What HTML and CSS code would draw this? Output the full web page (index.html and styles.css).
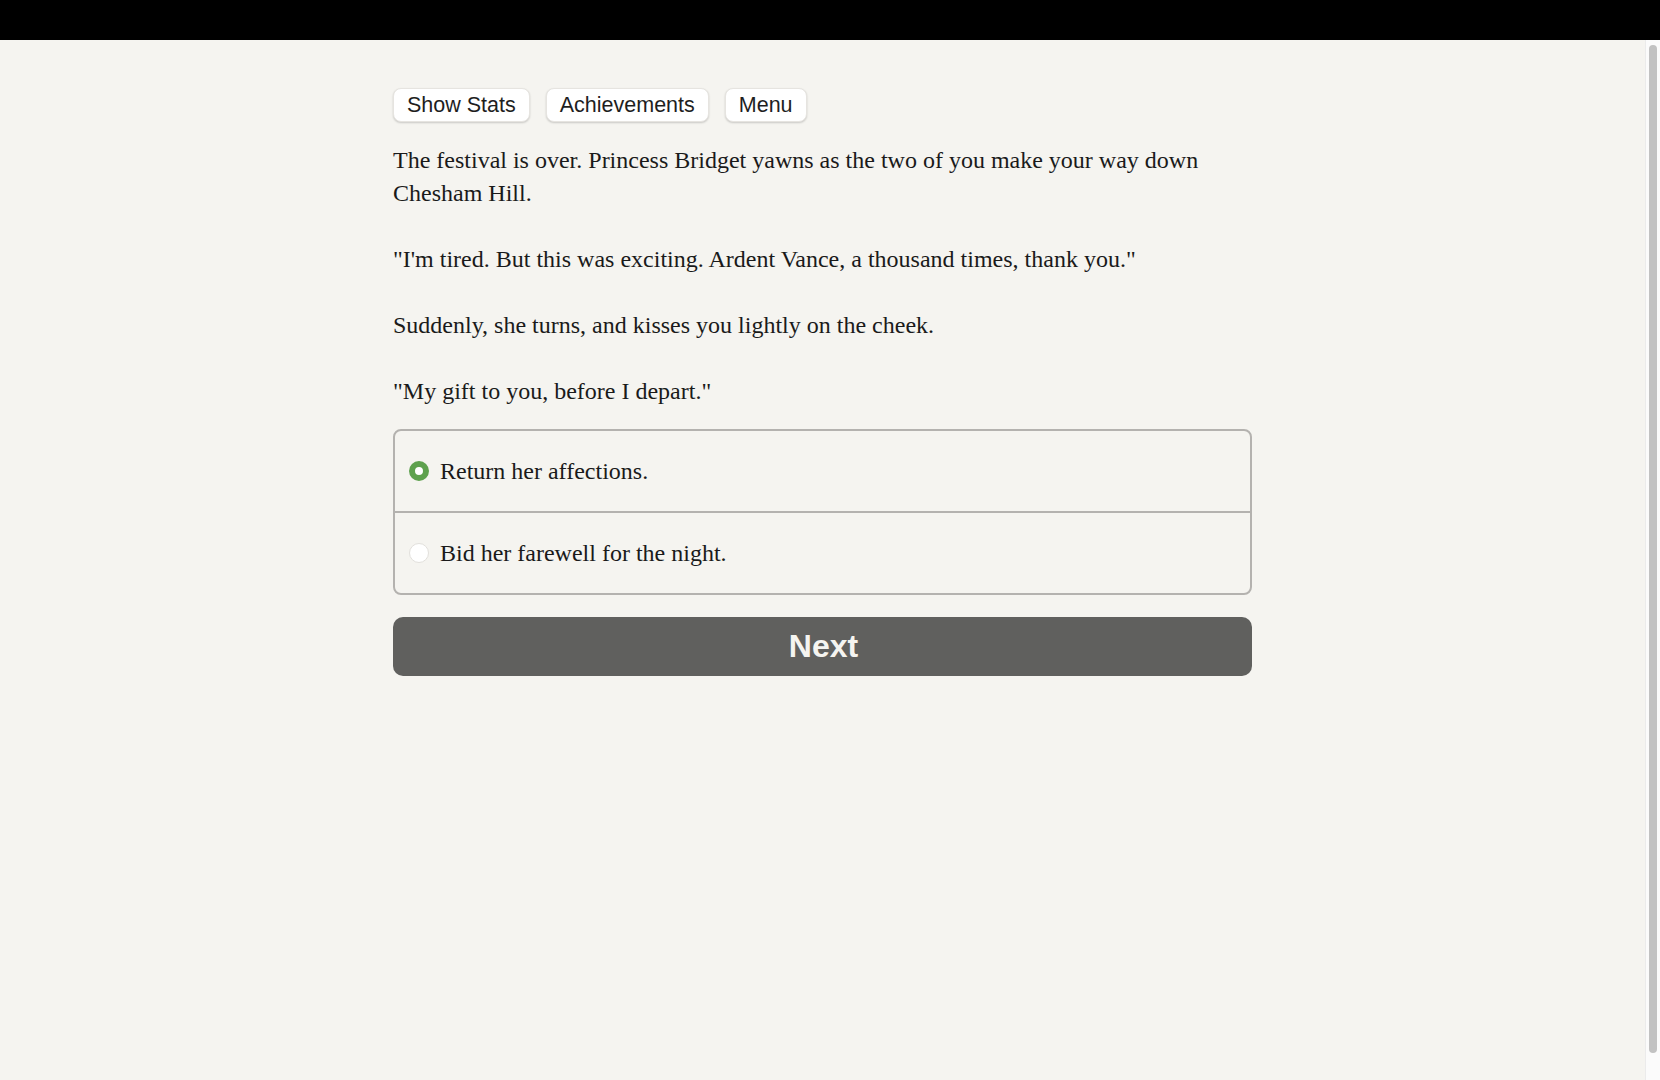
FILE: index.html
```html
<!DOCTYPE html>
<html>
<head>
<meta charset="utf-8">
<link rel="stylesheet" href="styles.css">
</head>
<body>
<div class="topbar"></div>
<div class="frame">
  <main class="page">
    <div class="content">
      <div class="toolbar">
        <button class="tbtn">Show Stats</button>
        <button class="tbtn">Achievements</button>
        <button class="tbtn">Menu</button>
      </div>
      <div class="story">
        <p>The festival is over. Princess Bridget yawns as the two of you make your way down Chesham Hill.</p>
        <p>"I'm tired. But this was exciting. Ardent Vance, a thousand times, thank you."</p>
        <p>Suddenly, she turns, and kisses you lightly on the cheek.</p>
        <p>"My gift to you, before I depart."</p>
      </div>
      <div class="choices">
        <label class="choice">
          <span class="radio checked"></span>
          <span class="ctext">Return her affections.</span>
        </label>
        <label class="choice">
          <span class="radio"></span>
          <span class="ctext">Bid her farewell for the night.</span>
        </label>
      </div>
      <button class="next">Next</button>
    </div>
  </main>
  <div class="scrollbar"><div class="thumb"></div></div>
</div>
</body>
</html>
```
FILE: styles.css
```css
html, body {
  margin: 0;
  padding: 0;
  height: 100%;
}
body {
  display: flex;
  flex-direction: column;
  overflow: hidden;
  background: #f5f4f0;
}
.topbar {
  height: 40px;
  background: #000;
  flex: none;
}
.frame {
  flex: 1;
  display: flex;
  min-height: 0;
}
.page {
  flex: 1;
  display: flex;
  justify-content: center;
}
.content {
  width: 859px;
  padding-top: 48px;
}
.toolbar {
  display: flex;
  gap: 16px;
}
.tbtn {
  font-family: "Liberation Sans", Arial, sans-serif;
  font-size: 21.5px;
  color: #1e1e1e;
  background: #fff;
  border: 1px solid #e6e4e0;
  border-radius: 8px;
  height: 34px;
  padding: 0 13px;
  box-shadow: 0 1px 2px rgba(0,0,0,0.18);
}
.story {
  margin-top: 22px;
  font-family: "Liberation Serif", "Times New Roman", serif;
  font-size: 24px;
  line-height: 33px;
  color: #1a1a1a;
}
.story p {
  margin: 0 0 33px 0;
}
.story p:last-child {
  margin-bottom: 0;
}
.choices {
  margin-top: 21px;
  border: 2px solid #b4b2af;
  border-radius: 8px;
  display: flex;
  flex-direction: column;
}
.choice {
  height: 80px;
  display: flex;
  align-items: center;
  padding-left: 14px;
  gap: 11px;
  font-family: "Liberation Serif", "Times New Roman", serif;
  font-size: 24px;
  color: #1a1a1a;
}
.choice + .choice {
  border-top: 2px solid #b4b2af;
}
.radio {
  width: 20px;
  height: 20px;
  border-radius: 50%;
  background: #fff;
  border: 1px solid #e2e0dc;
  box-sizing: border-box;
  flex: none;
}
.radio.checked {
  background: #fff;
  border: 6px solid #5ea14e;
}
.next {
  margin-top: 22px;
  width: 100%;
  height: 59px;
  border: none;
  border-radius: 10px;
  background: #60605e;
  color: #f5f4f0;
  font-family: "Liberation Sans", Arial, sans-serif;
  font-weight: bold;
  font-size: 32px;
  padding-right: 4px;
}
.scrollbar {
  width: 15px;
  flex: none;
  background: #fbfbfb;
  border-left: 1px solid #ebebeb;
  padding: 5px 3px 27px 3px;
  box-sizing: border-box;
  display: flex;
}
.thumb {
  flex: 1;
  background: #c2c2c2;
  border-radius: 5px;
}
```
